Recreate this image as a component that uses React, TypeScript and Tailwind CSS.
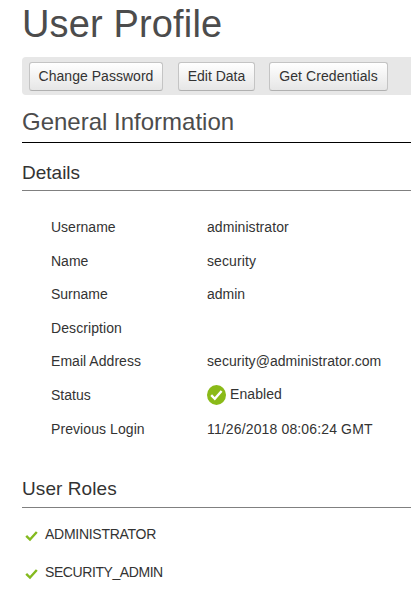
const rows = [
  { label: "Username", value: "administrator", labelSpacing: "tracking-[0]", valueSpacing: "tracking-[0.06px]" },
  { label: "Name", value: "security", labelSpacing: "tracking-[0]", valueSpacing: "tracking-[0.1px]" },
  { label: "Surname", value: "admin", labelSpacing: "tracking-[0]", valueSpacing: "tracking-[0]" },
  { label: "Description", value: "", labelSpacing: "tracking-[0.08px]", valueSpacing: "tracking-[0]" },
  { label: "Email Address", value: "security@administrator.com", labelSpacing: "tracking-[0.04px]", valueSpacing: "tracking-[0.05px]" },
  { label: "Status", value: "Enabled", labelSpacing: "tracking-[0]", valueSpacing: "mb-[2px] tracking-[0.08px]" },
  { label: "Previous Login", value: "11/26/2018 08:06:24 GMT", labelSpacing: "tracking-[0.08px]", valueSpacing: "tracking-[0.14px]" },
];

function Button({ children, className }: { children: string; className: string }) {
  return (
    <button className={`h-[29px] shrink-0 whitespace-nowrap rounded-[3px] border border-[#c4c4c4] border-b-[#b0b0b0] bg-linear-to-b from-white to-[#e6e6e6] text-center text-[14px] leading-[27px] text-[#333] ${className}`}>
      {children}
    </button>
  );
}

function Role({ name, className }: { name: string; className: string }) {
  return (
    <li className="flex h-[38px] items-center">
      <svg className="mt-[3px] ml-[3px] mr-[7px] h-[12px] w-[13px]" viewBox="0 0 13 12" fill="none" stroke="#84ba1f" strokeWidth="2.4">
        <path d="M1.2 5.8 L5 9.6 L11.8 2" />
      </svg>
      <span className={className}>{name}</span>
    </li>
  );
}

export default function App() {
  return (
    <main className="h-[613px] w-[411px] overflow-hidden bg-white pl-[22px] font-['Liberation_Sans',Arial,sans-serif] text-[14px] text-[#333]">
      <h1 className="h-[57px] pt-[1px] text-[38px] leading-[46px] tracking-[0.15px] text-[#4c4c4c]">User Profile</h1>
      <div className="flex h-[38px] items-center gap-[15px] rounded-l-[4px] bg-[#e7e7e7] pl-[7px]">
        <Button className="w-[134px] tracking-[0.03px]">Change Password</Button>
        <Button className="w-[77px]">Edit Data</Button>
        <Button className="ml-[-1px] w-[119px] tracking-[0.09px]">Get Credentials</Button>
      </div>
      <h2 className="h-[48px] border-b border-black pt-[12px] text-[24px] leading-[30px] text-[#4c4c4c]">General Information</h2>
      <h3 className="h-[48px] border-b border-[#808080] pt-[18px] text-[19px] leading-[24px] text-[#333]">Details</h3>
      <dl className="mt-[20px] h-[236px] pl-[29px]">
        {rows.map(({ label, value, labelSpacing, valueSpacing }) => (
          <div key={label} className={`flex h-[33.6px] items-center ${label === "Email Address" ? "pb-[2px]" : ""}`}>
            <dt className="w-[156px]">
              <span className={labelSpacing}>{label}</span>
            </dt>
            <dd className="flex items-center">
              {label === "Status" && (
                <svg className="mr-[4px] mb-[2px] h-[20px] w-[19px]" viewBox="0 0 19 20">
                  <ellipse cx="9.5" cy="10" rx="9.5" ry="10" fill="#8aba18" />
                  <path d="M4.2 10.2 L7.8 13.8 L14.6 6" fill="none" stroke="white" strokeWidth="2.4" />
                </svg>
              )}
              <span className={valueSpacing}>{value}</span>
            </dd>
          </div>
        ))}
      </dl>
      <h3 className="mt-[29px] h-[32px] border-b border-[#808080] pt-px text-[19px] leading-[24px] tracking-[0.08px] text-[#333]">User Roles</h3>
      <ul className="mt-[7px]">
        <Role name="ADMINISTRATOR" className="tracking-[-0.28px]" />
        <Role name="SECURITY_ADMIN" className="tracking-[-0.42px]" />
      </ul>
    </main>
  );
}
